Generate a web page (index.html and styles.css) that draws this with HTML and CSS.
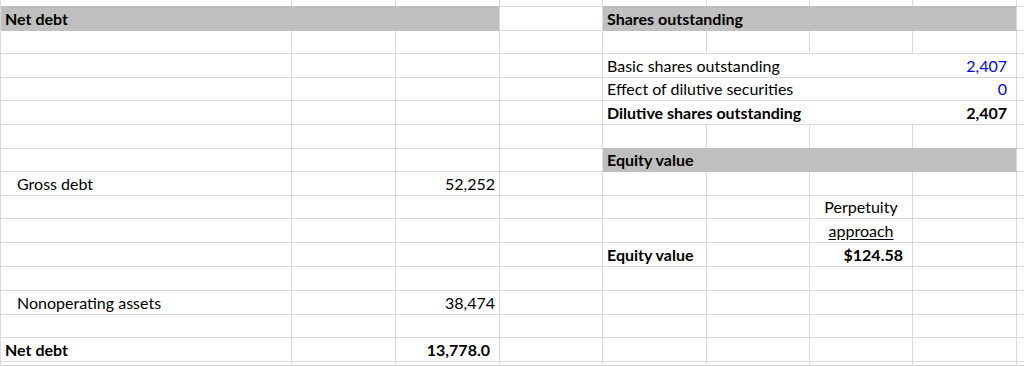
FILE: index.html
```html
<!DOCTYPE html>
<html>
<head>
<meta charset="utf-8">
<link rel="stylesheet" href="styles.css">
</head>
<body>
<div class="sheet">
  <!-- row 0 (partial) -->
  <div class="c"></div><div class="c"></div><div class="c"></div><div class="c"></div><div class="c"></div><div class="c"></div><div class="c"></div><div class="c"></div><div class="c"></div>
  <!-- row 1 -->
  <div class="c band span3"><span class="b">Net debt</span></div><div class="c"></div><div class="c band span4"><span class="b">Shares outstanding</span></div><div class="c"></div>
  <!-- row 2 -->
  <div class="c"></div><div class="c"></div><div class="c"></div><div class="c"></div><div class="c"></div><div class="c"></div><div class="c"></div><div class="c"></div><div class="c"></div>
  <!-- row 3 -->
  <div class="c"></div><div class="c"></div><div class="c"></div><div class="c"></div><div class="c span4 split"><span>Basic shares outstanding</span><span class="num blue">2,407</span></div><div class="c"></div>
  <!-- row 4 -->
  <div class="c"></div><div class="c"></div><div class="c"></div><div class="c"></div><div class="c span4 split"><span>Effect of dilutive securities</span><span class="num blue">0</span></div><div class="c"></div>
  <!-- row 5 -->
  <div class="c"></div><div class="c"></div><div class="c"></div><div class="c"></div><div class="c span4 split"><span class="b">Dilutive shares outstanding</span><span class="num b">2,407</span></div><div class="c"></div>
  <!-- row 6 -->
  <div class="c"></div><div class="c"></div><div class="c"></div><div class="c"></div><div class="c"></div><div class="c"></div><div class="c"></div><div class="c"></div><div class="c"></div>
  <!-- row 7 -->
  <div class="c"></div><div class="c"></div><div class="c"></div><div class="c"></div><div class="c band span4"><span class="b">Equity value</span></div><div class="c"></div>
  <!-- row 8 -->
  <div class="c indent">Gross debt</div><div class="c"></div><div class="c right">52,252</div><div class="c"></div><div class="c"></div><div class="c"></div><div class="c"></div><div class="c"></div><div class="c"></div>
  <!-- row 9 -->
  <div class="c"></div><div class="c"></div><div class="c"></div><div class="c"></div><div class="c"></div><div class="c"></div><div class="c center">Perpetuity</div><div class="c"></div><div class="c"></div>
  <!-- row 10 -->
  <div class="c"></div><div class="c"></div><div class="c"></div><div class="c"></div><div class="c"></div><div class="c"></div><div class="c center"><span class="ul">approach</span></div><div class="c"></div><div class="c"></div>
  <!-- row 11 -->
  <div class="c"></div><div class="c"></div><div class="c"></div><div class="c"></div><div class="c"><span class="b">Equity value</span></div><div class="c"></div><div class="c right acct"><span class="b">$124.58</span></div><div class="c"></div><div class="c"></div>
  <!-- row 12 -->
  <div class="c"></div><div class="c"></div><div class="c"></div><div class="c"></div><div class="c"></div><div class="c"></div><div class="c"></div><div class="c"></div><div class="c"></div>
  <!-- row 13 -->
  <div class="c indent">Nonoperating assets</div><div class="c"></div><div class="c right">38,474</div><div class="c"></div><div class="c"></div><div class="c"></div><div class="c"></div><div class="c"></div><div class="c"></div>
  <!-- row 14 -->
  <div class="c"></div><div class="c"></div><div class="c"></div><div class="c"></div><div class="c"></div><div class="c"></div><div class="c"></div><div class="c"></div><div class="c"></div>
  <!-- row 15 -->
  <div class="c"><span class="b">Net debt</span></div><div class="c"></div><div class="c right acct"><span class="b">13,778.0</span></div><div class="c"></div><div class="c"></div><div class="c"></div><div class="c"></div><div class="c"></div><div class="c"></div>
  <!-- row 16 (partial) -->
  <div class="c"></div><div class="c"></div><div class="c"></div><div class="c"></div><div class="c"></div><div class="c"></div><div class="c"></div><div class="c"></div><div class="c"></div>
</div>
</body>
</html>
```

FILE: styles.css
```css
html, body {
  margin: 0;
  padding: 0;
  background: #ffffff;
  overflow: hidden;
}

.sheet {
  display: grid;
  width: 1024px;
  height: 366px;
  box-sizing: border-box;
  border-left: 1px solid #dadada;
  grid-template-columns: 291px 104px 104px 103px 104px 103px 103px 104px 1fr;
  grid-template-rows: 7px 24px 23px 24px 23px 24px 24px 23px 24px 23px 24px 24px 24px 24px 23px 24px 4px;
  font-family: Lato, "Liberation Sans", sans-serif;
  font-size: 16px;
  color: #000000;
}

.c {
  box-sizing: border-box;
  border-right: 1px solid #dadada;
  border-bottom: 1px solid #dadada;
  display: flex;
  align-items: flex-end;
  padding: 0 4px 2px 4px;
  line-height: 19px;
  white-space: nowrap;
  overflow: visible;
  min-width: 0;
}

.span3 { grid-column: span 3; }
.span4 { grid-column: span 4; }

.band {
  background: #bfbfbf;
  border-bottom-color: #bfbfbf;
  box-shadow: 0 -1px 0 #bfbfbf;
}

.split {
  justify-content: space-between;
  padding-right: 9px;
}

.b { font-weight: 700; }
.blue { color: #0000ff; }

.indent { padding-left: 16px; }
.right { justify-content: flex-end; }
.acct { padding-right: 9px; }
.center { justify-content: center; }

.ul {
  text-decoration: underline;
  text-underline-offset: 2px;
}
```
